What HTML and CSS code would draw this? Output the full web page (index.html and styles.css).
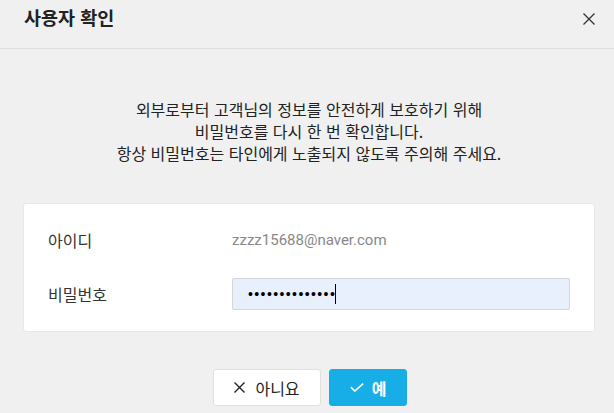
FILE: index.html
```html
<!DOCTYPE html>
<html lang="ko">
<head>
<meta charset="utf-8">
<title>사용자 확인</title>
<link rel="stylesheet" href="styles.css">
</head>
<body>
<div class="dialog">
  <header class="dialog-header">
    <h1 class="dialog-title">사용자 확인</h1>
    <button class="close-btn" aria-label="닫기">
      <svg width="12" height="12" viewBox="0 0 12 12"><path d="M0.5 0.5 L11.5 11.5 M11.5 0.5 L0.5 11.5" stroke="#333" stroke-width="1.3" fill="none"/></svg>
    </button>
  </header>
  <div class="dialog-body">
    <p class="notice">외부로부터 고객님의 정보를 안전하게 보호하기 위해<br>비밀번호를 다시 한 번 확인합니다.<br>항상 비밀번호는 타인에게 노출되지 않도록 주의해 주세요.</p>
    <div class="card">
      <div class="row">
        <span class="label">아이디</span>
        <span class="value">zzzz15688@naver.com</span>
      </div>
      <div class="row">
        <span class="label">비밀번호</span>
        <div class="input"><span class="dots">••••••••••••••</span><span class="caret"></span></div>
      </div>
    </div>
    <div class="actions">
      <button class="btn btn-cancel">
        <svg width="11" height="11" viewBox="0 0 11 11"><path d="M0.5 0.5 L10.5 10.5 M10.5 0.5 L0.5 10.5" stroke="#222" stroke-width="1.4" fill="none"/></svg>
        <span>아니요</span>
      </button>
      <button class="btn btn-ok">
        <svg width="14" height="9" viewBox="0 0 14 9"><path d="M0.8 4.2 L4.8 8 L13.2 0.6" stroke="#fff" stroke-width="1.6" fill="none"/></svg>
        <span>예</span>
      </button>
    </div>
  </div>
</div>
</body>
</html>
```

FILE: styles.css
```css
* { box-sizing: border-box; }
html, body {
  margin: 0;
  padding: 0;
  background: #f0f0f0;
}
body {
  font-family: "Noto Sans CJK KR", "Noto Sans", sans-serif;
  color: #222;
  width: 614px;
  height: 413px;
  overflow: hidden;
}
.dialog {
  display: flex;
  flex-direction: column;
}
.dialog-header {
  height: 49px;
  border-bottom: 1px solid #dedede;
  display: flex;
  align-items: flex-start;
  justify-content: space-between;
  padding: 3px 19px 0 24px;
}
.dialog-title {
  margin: 0;
  font-size: 18.5px;
  font-weight: 700;
  line-height: 28px;
  color: #222;
}
.close-btn {
  border: 0;
  background: none;
  padding: 0;
  margin-top: 10px;
  width: 12px;
  height: 12px;
  display: block;
}
.close-btn svg { display: block; }
.dialog-body {
  padding: 0 19px 0 23px;
  display: flex;
  flex-direction: column;
}
.notice {
  margin: 49px 0 0;
  text-align: center;
  font-size: 16px;
  line-height: 22px;
  color: #222;
}
.card {
  margin-top: 39px;
  background: #fff;
  border: 1px solid #e8e8e8;
  border-radius: 3px;
  padding: 20px 24px 21px;
  display: flex;
  flex-direction: column;
  gap: 22px;
}
.row {
  display: flex;
  align-items: center;
  height: 32px;
}
.label {
  width: 184px;
  flex: none;
  font-size: 16px;
  color: #333;
}
.value {
  font-family: Roboto, "Noto Sans", sans-serif;
  font-size: 15px;
  color: #888;
}
.input {
  flex: 1;
  height: 32px;
  background: #e8f0fe;
  border: 1px solid #d3d7dc;
  border-radius: 2px;
  display: flex;
  align-items: center;
  padding-left: 15px;
}
.dots {
  font-family: "Liberation Sans", sans-serif;
  font-size: 14px;
  letter-spacing: 1.4px;
  color: #000;
  line-height: 1;
}
.caret {
  width: 1px;
  height: 20px;
  background: #000;
  margin-left: -1px;
}
.actions {
  margin-top: 37px;
  padding-left: 2px;
  display: flex;
  justify-content: center;
  gap: 8px;
}
.btn {
  height: 37px;
  border-radius: 3px;
  font-family: "Noto Sans CJK KR", sans-serif;
  font-size: 16px;
  display: flex;
  align-items: center;
  justify-content: center;
  gap: 10px;
  padding: 0;
  cursor: pointer;
}
.btn svg { display: block; }
.btn-cancel {
  width: 108px;
  background: #fff;
  border: 1px solid #e0e0e0;
  color: #222;
}
.btn-ok {
  width: 78px;
  background: #17aee8;
  border: 1px solid #17aee8;
  color: #fff;
  font-weight: 700;
  gap: 8px;
}
```
